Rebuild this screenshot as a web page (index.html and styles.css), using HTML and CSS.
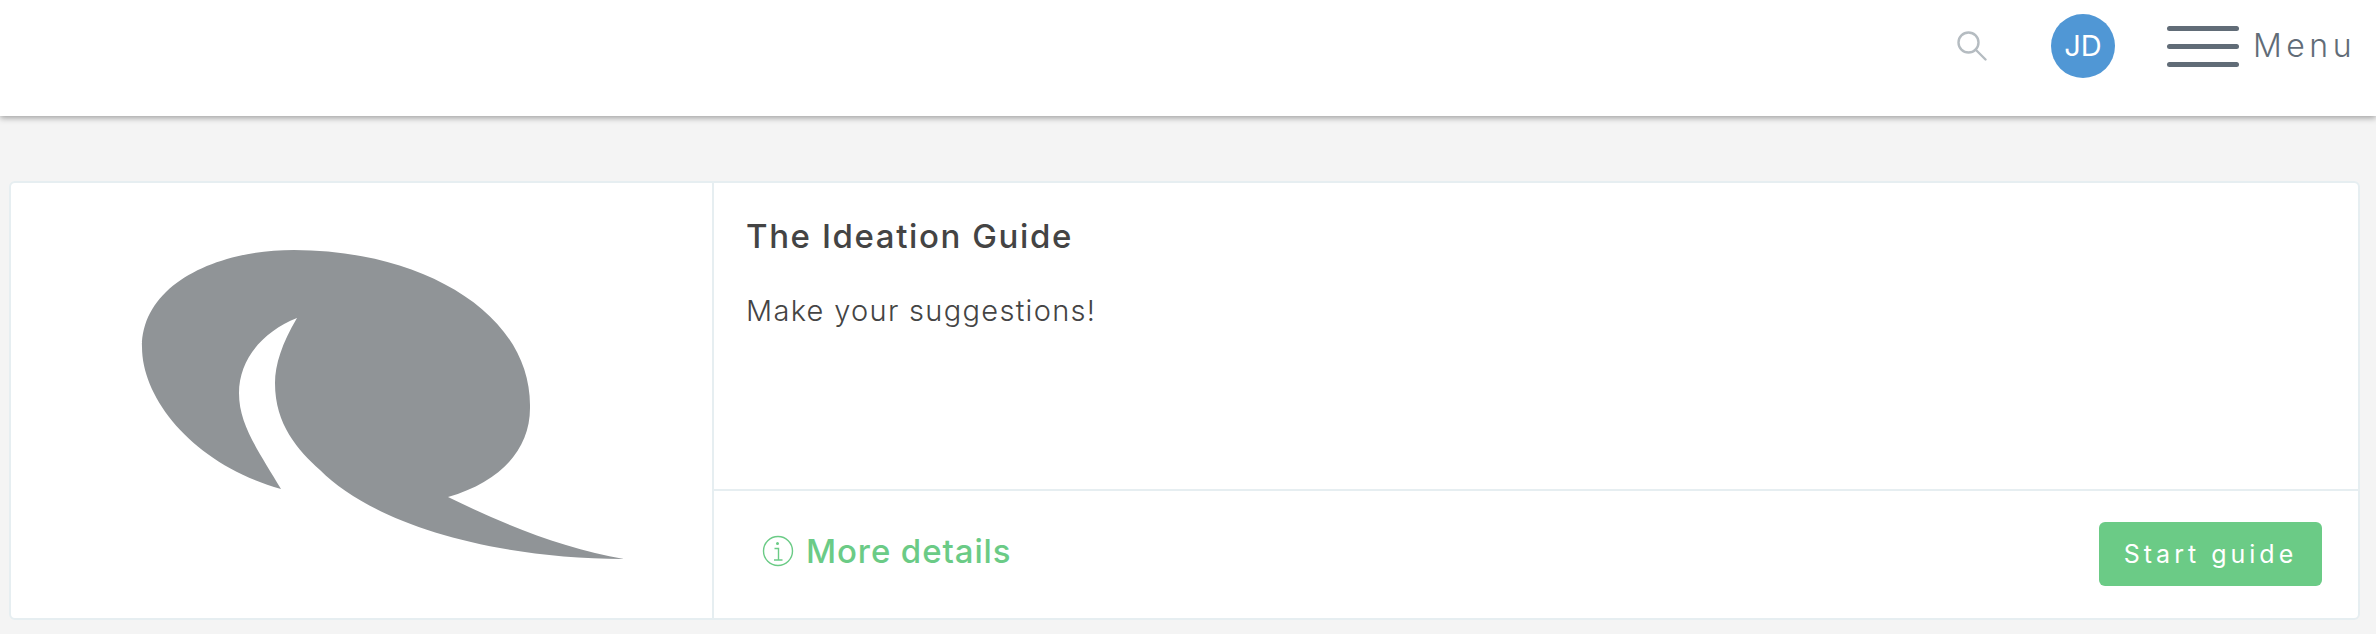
FILE: index.html
```html
<!DOCTYPE html>
<html lang="en">
<head>
    <meta charset="UTF-8">
    <meta name="viewport" content="width=device-width, initial-scale=1.0">
    <title>The Ideation Guide</title>
    <link rel="stylesheet" href="styles.css">
</head>
<body>
    <header class="topbar">
        <svg class="search-icon" width="30" height="30" viewBox="0 0 30 30" fill="none" stroke="#b5bcc1" stroke-width="2.4">
            <circle cx="11.5" cy="11.5" r="10"/>
            <path d="M18.5 18.5 L28.5 28.5" stroke-linecap="round"/>
        </svg>
        <div class="avatar">JD</div>
        <div class="menu">
            <div class="burger"><span></span><span></span><span></span></div>
            <span class="menu-label">Menu</span>
        </div>
    </header>

    <main class="content">
        <div class="card">
            <div class="card-image">
                <svg class="logo" width="703" height="439" viewBox="9 181 703 439">
                    <path fill="#909497" d="M624 559 C565 549 505 525 448 497 C500 482 530 450 530 408 C532 312 420 250 294 250 C215 250 142 285 142 347 C142 400 195 465 281 489 C258 450 239 425 239 393 C239 360 262 332 297 318 C282 343 275 365 275 383 C275 425 298 450 320 470 C370 520 480 558 624 559 Z"/>
                </svg>
            </div>
            <div class="card-body">
                <div class="card-text">
                    <h2>The Ideation Guide</h2>
                    <p>Make your suggestions!</p>
                </div>
                <div class="card-footer">
                    <a class="details" href="#">
                        <svg width="32" height="32" viewBox="0 0 32 32" fill="none" stroke="#6bcb86" stroke-width="1.4">
                            <circle cx="16" cy="16" r="14.5"/>
                            <path d="M12.5 13.5 H16.5 V25 M12 25 H20.5"/>
                            <circle cx="15.5" cy="8.5" r="0.8" fill="#6bcb86"/>
                        </svg>
                        More details
                    </a>
                    <button type="button" class="start-btn">Start guide</button>
                </div>
            </div>
        </div>
    </main>
</body>
</html>
```

FILE: styles.css
```css
body {
    margin: 0;
    font-family: Inter, "Noto Sans", sans-serif;
    background-color: #f4f4f4;
    color: #444;
}
.topbar {
    height: 116px;
    box-sizing: border-box;
    background: #fff;
    box-shadow: 0 2px 6px rgba(0, 0, 0, 0.35);
    display: flex;
    align-items: center;
    justify-content: flex-end;
    padding: 0 20px 24px 0;
}
.search-icon {
    margin-right: 64px;
}
.avatar {
    width: 64px;
    height: 64px;
    border-radius: 50%;
    background: #5097d5;
    color: #fff;
    font-size: 29px;
    line-height: 64px;
    text-align: center;
    margin-right: 52px;
}
.menu {
    display: flex;
    align-items: center;
    gap: 14px;
}
.burger {
    width: 72px;
    display: flex;
    flex-direction: column;
    gap: 13px;
}
.burger span {
    height: 5px;
    background: #616c77;
    border-radius: 3px;
}
.menu-label {
    font-size: 32px;
    font-weight: 300;
    color: #616c77;
    letter-spacing: 4.5px;
    padding-bottom: 2px;
}
.content {
    padding: 65px 16px 0 9px;
}
.card {
    display: flex;
    height: 439px;
    box-sizing: border-box;
    background: #fff;
    border: 2px solid #e6eef1;
    border-radius: 6px;
}
.card-image {
    width: 701px;
    flex: none;
    border-right: 2px solid #e6eef1;
    margin: -2px 0 -2px -2px;
    padding-right: 2px;
}
.logo {
    display: block;
}
.card-body {
    flex: 1;
    display: flex;
    flex-direction: column;
}
.card-text {
    flex: 1;
    padding: 33px 32px 0;
}
.card-text h2 {
    margin: 0;
    font-size: 33px;
    font-weight: 500;
    letter-spacing: 1.6px;
    color: #444;
}
.card-text p {
    margin: 37px 0 0;
    font-size: 29px;
    font-weight: 300;
    letter-spacing: 1.3px;
    color: #444;
}
.card-footer {
    height: 129px;
    box-sizing: border-box;
    flex: none;
    border-top: 2px solid #e6eef1;
    display: flex;
    align-items: center;
    justify-content: space-between;
    padding: 0 36px 2px 48px;
}
.details {
    display: flex;
    align-items: center;
    gap: 12px;
    color: #6bcb86;
    font-size: 33px;
    font-weight: 500;
    letter-spacing: 0.9px;
    text-decoration: none;
    margin-bottom: 6px;
}
.start-btn {
    width: 223px;
    height: 64px;
    background-color: #6bcb86;
    color: #fff;
    border: none;
    border-radius: 6px;
    font-family: inherit;
    font-size: 25px;
    font-weight: 400;
    letter-spacing: 4px;
    cursor: pointer;
}
```
